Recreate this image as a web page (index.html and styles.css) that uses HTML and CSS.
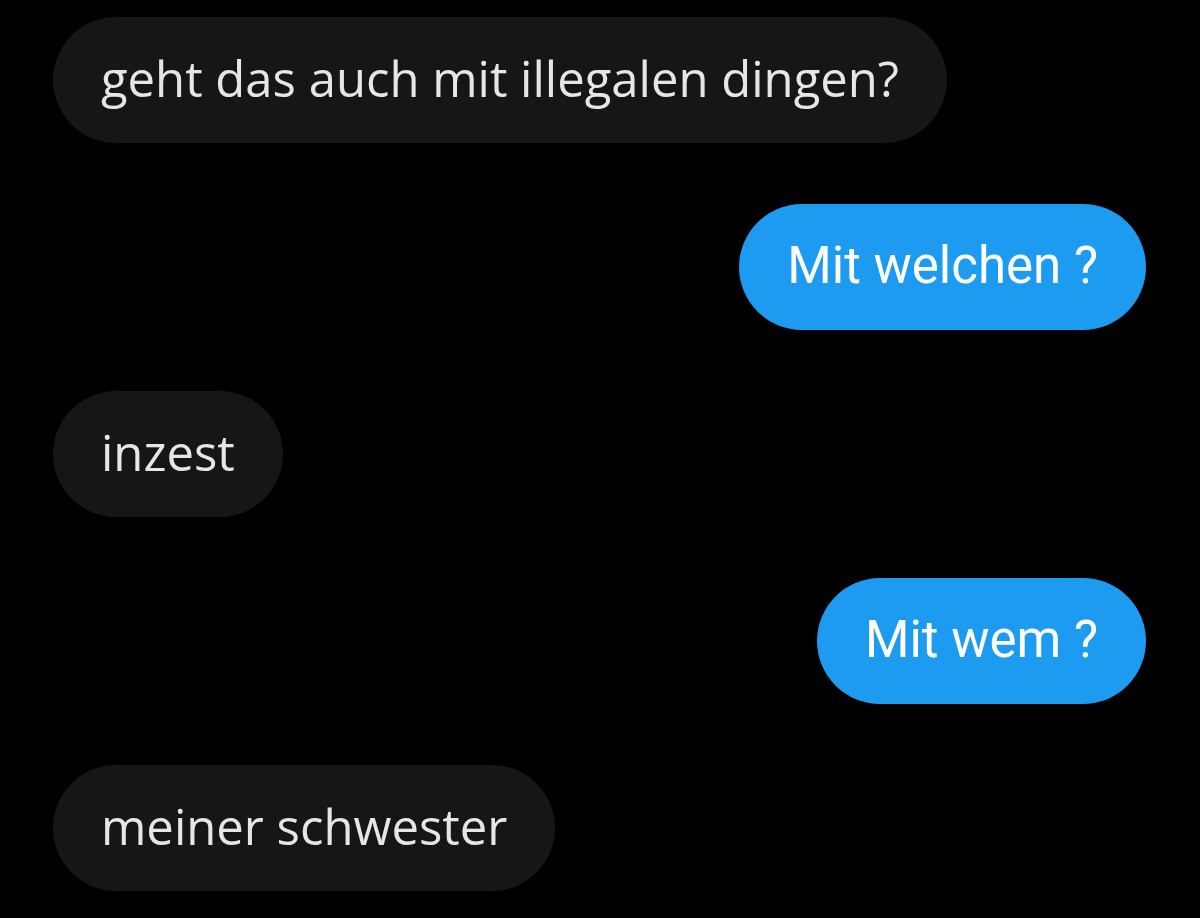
FILE: index.html
```html
<!DOCTYPE html>
<html lang="de">
<head>
<meta charset="utf-8">
<link rel="stylesheet" href="styles.css">
</head>
<body>
<main class="chat">
  <div class="msg in"><span>geht das auch mit illegalen dingen?</span></div>
  <div class="msg out"><span>Mit welchen ?</span></div>
  <div class="msg in"><span>inzest</span></div>
  <div class="msg out"><span>Mit wem ?</span></div>
  <div class="msg in"><span>meiner schwester</span></div>
</main>
</body>
</html>
```
FILE: styles.css
```css
html, body {
  margin: 0;
  padding: 0;
  background: #000;
  width: 1200px;
  height: 918px;
  overflow: hidden;
}
.chat {
  display: flex;
  flex-direction: column;
  gap: 61px;
  padding: 17px 54px 0 53px;
}
.msg {
  height: 126px;
  box-sizing: border-box;
  display: flex;
  align-items: center;
  padding: 0 48px;
  border-radius: 63px;
  white-space: nowrap;
}
.in {
  align-self: flex-start;
  background: #161616;
  color: #e6e6e6;
  font-family: "Open Sans", "Noto Sans", sans-serif;
  font-size: 49px;
  padding-bottom: 4px;
}
.out {
  align-self: flex-end;
  background: #1d9bf0;
  color: #fff;
  font-family: Roboto, "Liberation Sans", sans-serif;
  font-size: 51px;
  padding-bottom: 4px;
}
```
